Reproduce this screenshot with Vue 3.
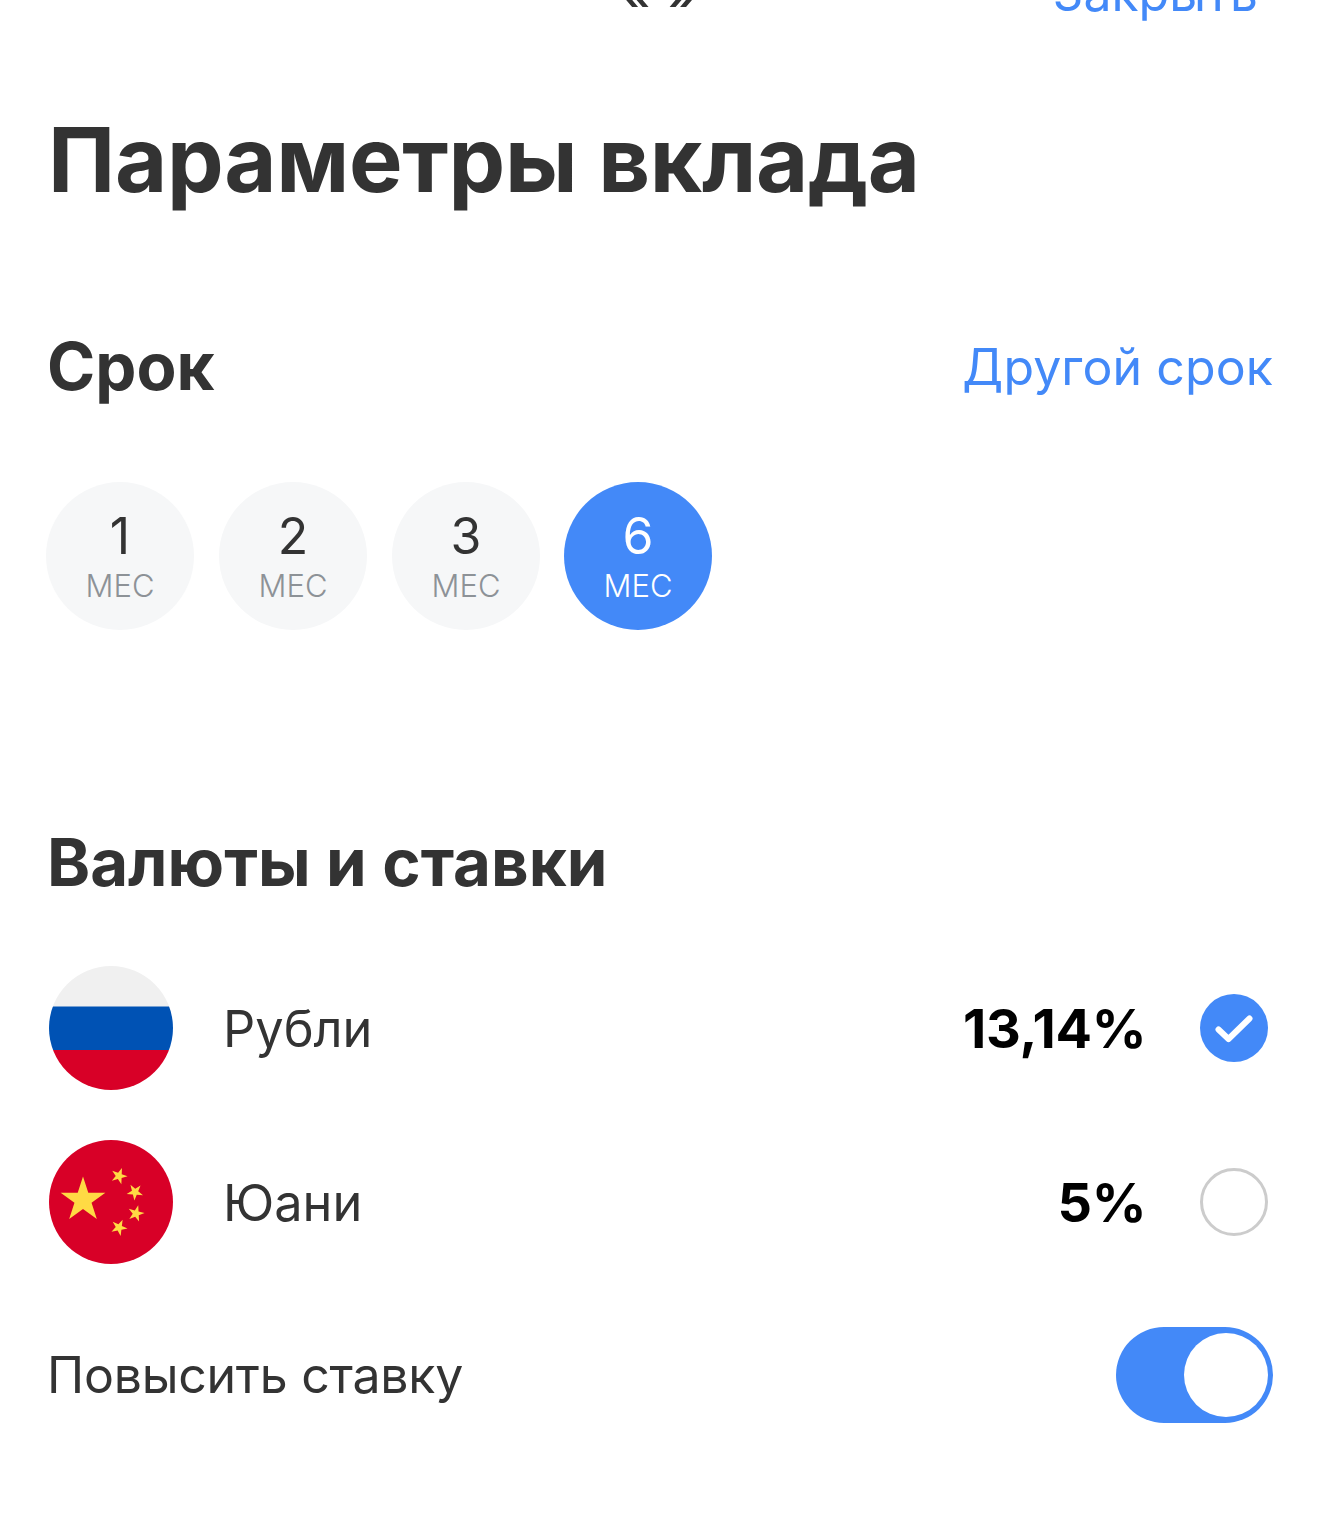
<script setup>
const terms = [
  { n: 1, active: false },
  { n: 2, active: false },
  { n: 3, active: false },
  { n: 6, active: true }
]
function star(cx, cy, r, rot = 0) {
  const pts = []
  for (let i = 0; i < 10; i++) {
    const rad = i % 2 === 0 ? r : r * 0.382
    const a = ((-90 + rot + i * 36) * Math.PI) / 180
    pts.push((cx + rad * Math.cos(a)).toFixed(2) + ',' + (cy + rad * Math.sin(a)).toFixed(2))
  }
  return pts.join(' ')
}
const stars = [
  star(34, 60, 23.5),
  star(70, 36, 8.6, 20),
  star(86, 52, 8.6, 40),
  star(87, 73.5, 8.6, 15),
  star(70, 87.5, 8.6, 25)
]
</script>

<template>
  <div class="page">
    <header class="top">
      <span class="quotes">« »</span>
      <a class="close">Закрыть</a>
    </header>

    <h1 class="title">Параметры вклада</h1>

    <section class="term">
      <div class="head">
        <h2 class="h2">Срок</h2>
        <a class="link">Другой срок</a>
      </div>
      <div class="pills">
        <div v-for="t in terms" :key="t.n" class="pill" :class="{ on: t.active }">
          <span class="num">{{ t.n }}</span>
          <span class="mes">МЕС</span>
        </div>
      </div>
    </section>

    <section class="rates">
      <h2 class="h2">Валюты и ставки</h2>

      <div class="row first">
        <svg class="flag" viewBox="0 0 124 124">
          <defs><clipPath id="c1"><circle cx="62" cy="62" r="62" /></clipPath></defs>
          <g clip-path="url(#c1)">
            <rect width="124" height="41" fill="#f0f0f0" />
            <rect y="40.5" width="124" height="43.5" fill="#0052b4" />
            <rect y="84" width="124" height="40" fill="#d80027" />
          </g>
        </svg>
        <span class="cur">Рубли</span>
        <span class="rate">13,14%</span>
        <span class="radio checked">
          <svg viewBox="0 0 68 68" class="tick">
            <path d="M18.5 35.5 L28.5 45 L49.5 24.5" fill="none" stroke="#fff" stroke-width="6" stroke-linecap="round" stroke-linejoin="round" />
          </svg>
        </span>
      </div>

      <div class="row">
        <svg class="flag" viewBox="0 0 124 124">
          <circle cx="62" cy="62" r="62" fill="#d80027" />
          <polygon v-for="(s, i) in stars" :key="i" :points="s" fill="#ffda44" />
        </svg>
        <span class="cur">Юани</span>
        <span class="rate">5%</span>
        <span class="radio"></span>
      </div>
    </section>

    <div class="boost">
      <span class="boost-label">Повысить ставку</span>
      <span class="toggle"><span class="knob"></span></span>
    </div>
  </div>
</template>

<style scoped>
.page {
  box-sizing: border-box;
  width: 1320px;
  height: 1521px;
  overflow: hidden;
  background: #fff;
  padding: 0 47px 0 48px;
  font-family: Inter, "Liberation Sans", sans-serif;
  color: #333;
}
.top {
  position: relative;
  height: 60px;
  margin-top: -37px;
  font-size: 50px;
  line-height: 60px;
}
.quotes {
  position: absolute;
  left: 572px;
  top: 0;
  color: #333;
  font-weight: 500;
  letter-spacing: 2px;
}
.close {
  position: absolute;
  right: 15px;
  top: 0;
  color: #4389f8;
}
.title {
  margin: 87px 0 0 0;
  font-size: 90px;
  line-height: 100px;
  font-weight: 700;
  letter-spacing: -0.3px;
  color: #333;
}
.term {
  margin-top: 122px;
}
.head {
  display: flex;
  justify-content: space-between;
  align-items: center;
  height: 70px;
}
.h2 {
  margin: 0 0 0 -1px;
  font-size: 65.3px;
  line-height: 70px;
  font-weight: 700;
  color: #333;
}
.link {
  font-size: 50px;
  letter-spacing: 0.1px;
  color: #4389f8;
}
.pills {
  display: flex;
  gap: 25px;
  margin: 80px 0 0 -2px;
}
.pill {
  width: 148px;
  height: 148px;
  border-radius: 50%;
  background: #f6f7f8;
  display: flex;
  flex-direction: column;
  align-items: center;
  padding-top: 24px;
  box-sizing: border-box;
}
.pill:last-child {
  margin-left: -1px;
}
.pill.on {
  background: #4389f8;
}
.num {
  font-size: 50px;
  line-height: 60px;
  color: #333;
}
.mes {
  font-size: 31px;
  line-height: 36px;
  margin-top: 2px;
  font-weight: 300;
  color: #8d9297;
}
.on .num,
.on .mes {
  color: #fff;
}
.rates {
  margin-top: 198px;
}
.row {
  display: flex;
  align-items: center;
  height: 124px;
  margin-top: 50px;
  padding-left: 1px;
}
.row.first {
  margin-top: 68px;
}
.flag {
  width: 124px;
  height: 124px;
  flex: none;
}
.cur {
  margin-left: 50px;
  font-size: 50.5px;
  color: #333;
}
.rate {
  margin-left: auto;
  font-size: 54px;
  letter-spacing: -0.2px;
  color: #000;
  font-weight: 700;
}
.radio {
  box-sizing: border-box;
  width: 68px;
  height: 68px;
  margin: 0 5.5px 0 53px;
  border-radius: 50%;
  border: 3px solid #ccc;
  flex: none;
}
.radio.checked {
  border: 0;
  background: #4389f8;
}
.tick {
  display: block;
  width: 68px;
  height: 68px;
}
.boost {
  display: flex;
  justify-content: space-between;
  align-items: center;
  margin-top: 63px;
  height: 96px;
}
.boost-label {
  margin-left: -1px;
  font-size: 50px;
  letter-spacing: -0.25px;
  color: #333;
}
.toggle {
  position: relative;
  width: 157px;
  height: 96px;
  border-radius: 48px;
  background: #4389f8;
}
.knob {
  position: absolute;
  left: 68px;
  top: 6px;
  width: 84px;
  height: 84px;
  border-radius: 50%;
  background: #fff;
}
</style>
